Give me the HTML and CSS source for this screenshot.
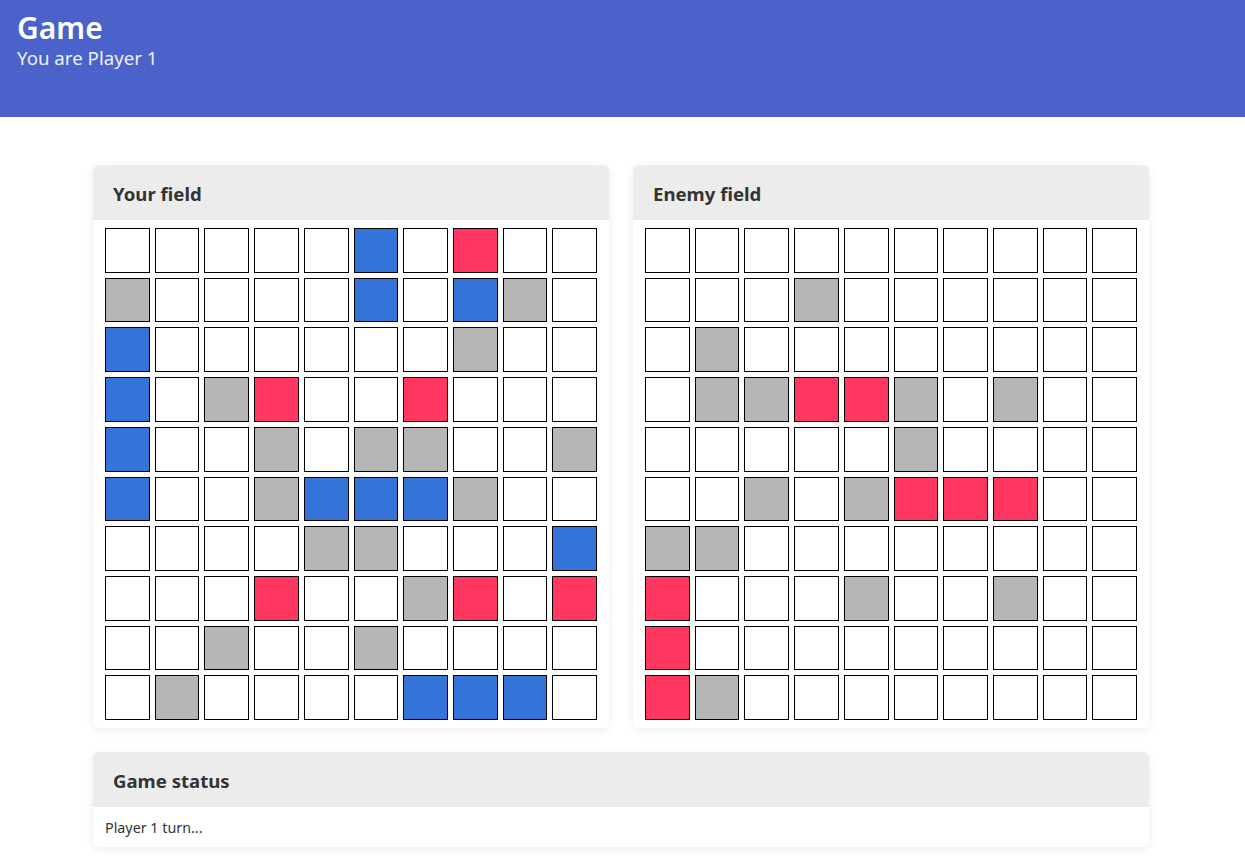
FILE: index.html
```html
<!DOCTYPE html>
<html>
<head>
<meta charset="utf-8">
<title>Game</title>
<link rel="stylesheet" href="styles.css">
</head>
<body>
<header class="topbar">
  <h1 class="title">Game</h1>
  <p class="subtitle">You are Player 1</p>
</header>
<main class="container">
  <div class="fields">
    <section class="card">
      <div class="card-head">Your field</div>
      <div class="card-body">
        <div class="board">
          <div class="c"></div><div class="c"></div><div class="c"></div><div class="c"></div><div class="c"></div><div class="c b"></div><div class="c"></div><div class="c r"></div><div class="c"></div><div class="c"></div>
          <div class="c g"></div><div class="c"></div><div class="c"></div><div class="c"></div><div class="c"></div><div class="c b"></div><div class="c"></div><div class="c b"></div><div class="c g"></div><div class="c"></div>
          <div class="c b"></div><div class="c"></div><div class="c"></div><div class="c"></div><div class="c"></div><div class="c"></div><div class="c"></div><div class="c g"></div><div class="c"></div><div class="c"></div>
          <div class="c b"></div><div class="c"></div><div class="c g"></div><div class="c r"></div><div class="c"></div><div class="c"></div><div class="c r"></div><div class="c"></div><div class="c"></div><div class="c"></div>
          <div class="c b"></div><div class="c"></div><div class="c"></div><div class="c g"></div><div class="c"></div><div class="c g"></div><div class="c g"></div><div class="c"></div><div class="c"></div><div class="c g"></div>
          <div class="c b"></div><div class="c"></div><div class="c"></div><div class="c g"></div><div class="c b"></div><div class="c b"></div><div class="c b"></div><div class="c g"></div><div class="c"></div><div class="c"></div>
          <div class="c"></div><div class="c"></div><div class="c"></div><div class="c"></div><div class="c g"></div><div class="c g"></div><div class="c"></div><div class="c"></div><div class="c"></div><div class="c b"></div>
          <div class="c"></div><div class="c"></div><div class="c"></div><div class="c r"></div><div class="c"></div><div class="c"></div><div class="c g"></div><div class="c r"></div><div class="c"></div><div class="c r"></div>
          <div class="c"></div><div class="c"></div><div class="c g"></div><div class="c"></div><div class="c"></div><div class="c g"></div><div class="c"></div><div class="c"></div><div class="c"></div><div class="c"></div>
          <div class="c"></div><div class="c g"></div><div class="c"></div><div class="c"></div><div class="c"></div><div class="c"></div><div class="c b"></div><div class="c b"></div><div class="c b"></div><div class="c"></div>
        </div>
      </div>
    </section>
    <section class="card">
      <div class="card-head">Enemy field</div>
      <div class="card-body">
        <div class="board">
          <div class="c"></div><div class="c"></div><div class="c"></div><div class="c"></div><div class="c"></div><div class="c"></div><div class="c"></div><div class="c"></div><div class="c"></div><div class="c"></div>
          <div class="c"></div><div class="c"></div><div class="c"></div><div class="c g"></div><div class="c"></div><div class="c"></div><div class="c"></div><div class="c"></div><div class="c"></div><div class="c"></div>
          <div class="c"></div><div class="c g"></div><div class="c"></div><div class="c"></div><div class="c"></div><div class="c"></div><div class="c"></div><div class="c"></div><div class="c"></div><div class="c"></div>
          <div class="c"></div><div class="c g"></div><div class="c g"></div><div class="c r"></div><div class="c r"></div><div class="c g"></div><div class="c"></div><div class="c g"></div><div class="c"></div><div class="c"></div>
          <div class="c"></div><div class="c"></div><div class="c"></div><div class="c"></div><div class="c"></div><div class="c g"></div><div class="c"></div><div class="c"></div><div class="c"></div><div class="c"></div>
          <div class="c"></div><div class="c"></div><div class="c g"></div><div class="c"></div><div class="c g"></div><div class="c r"></div><div class="c r"></div><div class="c r"></div><div class="c"></div><div class="c"></div>
          <div class="c g"></div><div class="c g"></div><div class="c"></div><div class="c"></div><div class="c"></div><div class="c"></div><div class="c"></div><div class="c"></div><div class="c"></div><div class="c"></div>
          <div class="c r"></div><div class="c"></div><div class="c"></div><div class="c"></div><div class="c g"></div><div class="c"></div><div class="c"></div><div class="c g"></div><div class="c"></div><div class="c"></div>
          <div class="c r"></div><div class="c"></div><div class="c"></div><div class="c"></div><div class="c"></div><div class="c"></div><div class="c"></div><div class="c"></div><div class="c"></div><div class="c"></div>
          <div class="c r"></div><div class="c g"></div><div class="c"></div><div class="c"></div><div class="c"></div><div class="c"></div><div class="c"></div><div class="c"></div><div class="c"></div><div class="c"></div>
        </div>
      </div>
    </section>
  </div>
  <section class="card status">
    <div class="card-head">Game status</div>
    <div class="status-body">Player 1 turn...</div>
  </section>
</main>
</body>
</html>
```
FILE: styles.css
```css
* { box-sizing: border-box; }
html, body { margin: 0; padding: 0; }
body {
  font-family: "Noto Sans", "Open Sans", "DejaVu Sans", sans-serif;
  background: #ffffff;
  color: #333333;
}
.topbar {
  background: #4a62c9;
  height: 117px;
  padding: 9px 17px 0;
  color: #ffffff;
}
.title {
  margin: 0;
  font-size: 30px;
  font-weight: 600;
  line-height: 37px;
}
.subtitle {
  margin: 0;
  font-size: 18.7px;
  line-height: 24px;
  color: #eef0fb;
}
.container {
  width: 1056px;
  margin: 48px auto 0 93px;
  display: flex;
  flex-direction: column;
  gap: 24px;
  padding-bottom: 14px;
}
.fields {
  display: grid;
  grid-template-columns: 1fr 1fr;
  gap: 24px;
}
.card {
  background: #ffffff;
  border-radius: 6px;
  box-shadow: 0 2px 10px rgba(0, 0, 0, 0.08);
  overflow: hidden;
}
.card-head {
  background: #ececec;
  height: 55px;
  display: flex;
  align-items: center;
  padding: 1px 20px 0;
  font-size: 18.6px;
  font-weight: 700;
  color: #333333;
}
.card-body {
  padding: 8px 12px;
}
.board {
  display: grid;
  grid-template-columns: repeat(10, 1fr);
  gap: 5px;
}
.c {
  aspect-ratio: 1 / 1;
  border: 1px solid #000000;
  background: #ffffff;
}
.c.b { background: #3474d9; }
.c.r { background: #ff3761; }
.c.g { background: #b6b6b6; }
.status-body {
  height: 40px;
  padding: 0 12px;
  display: flex;
  align-items: center;
  font-size: 14.3px;
  color: #333333;
}
```
